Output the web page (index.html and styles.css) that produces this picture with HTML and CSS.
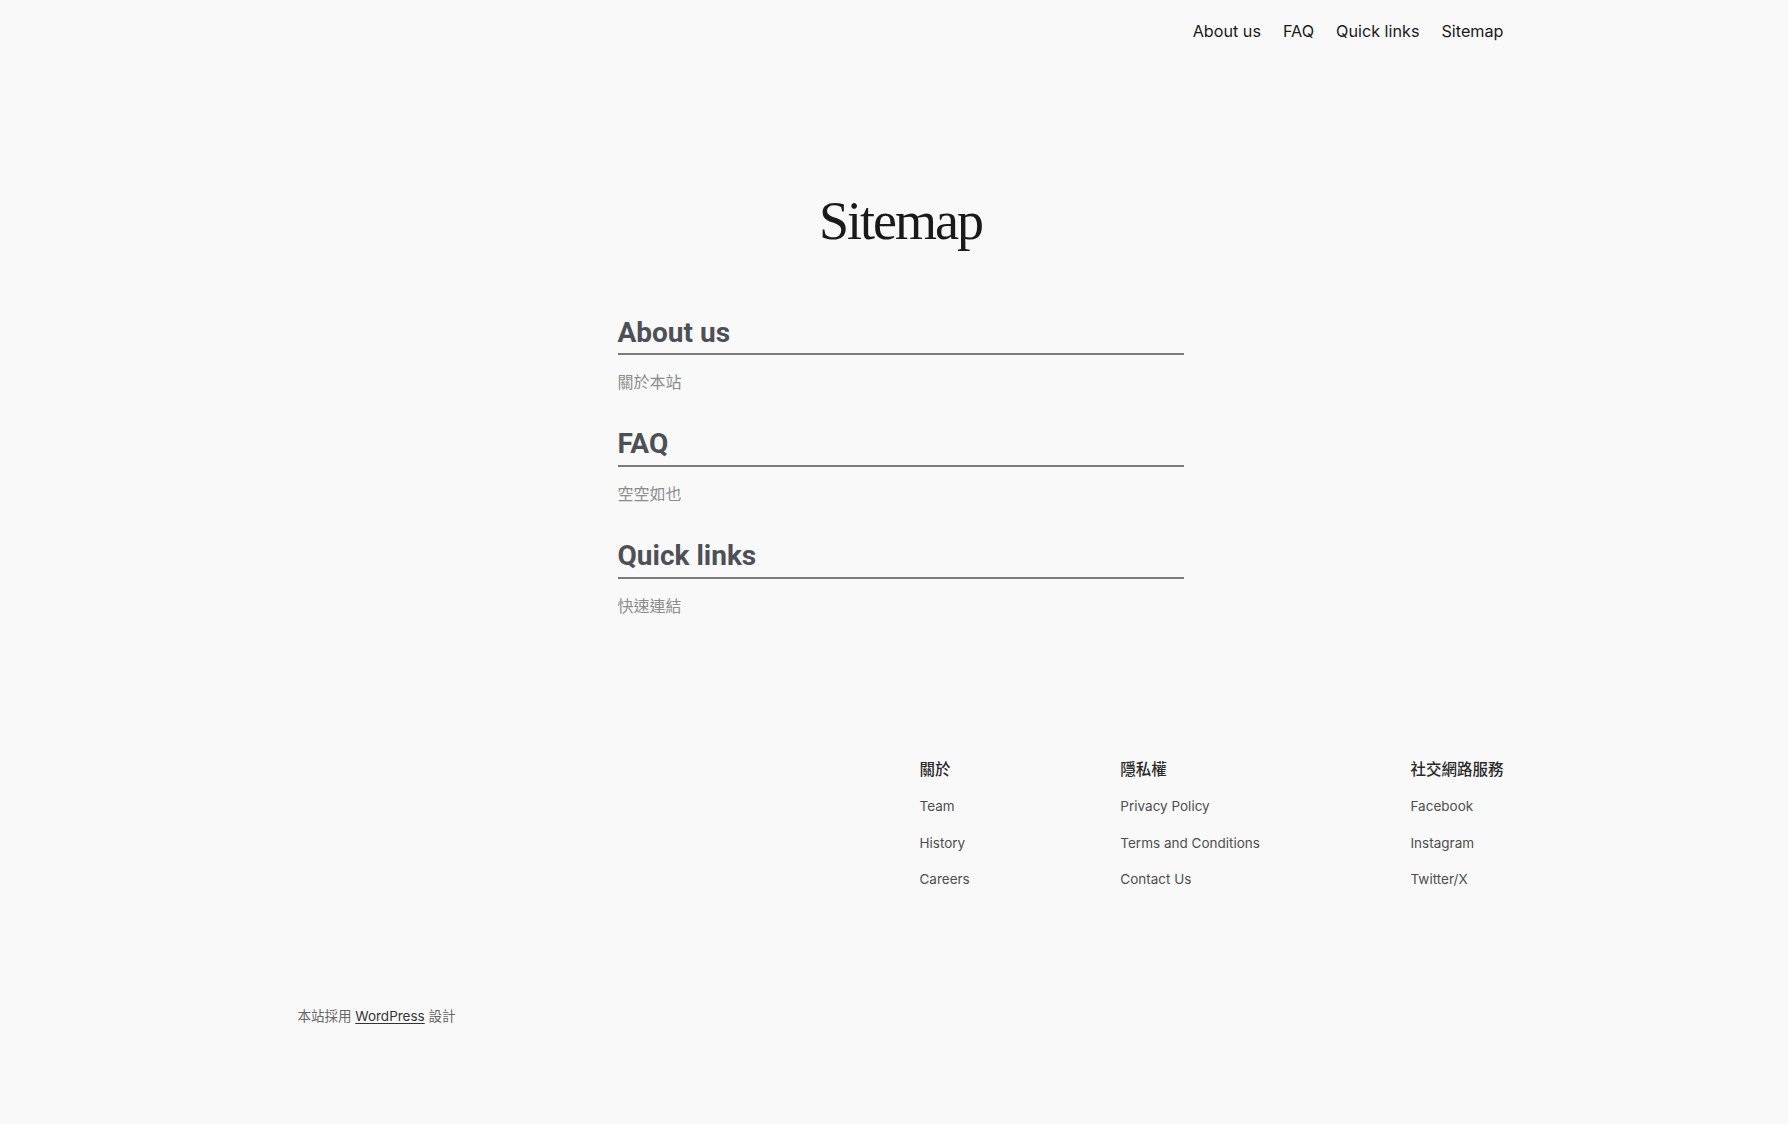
FILE: index.html
```html
<!DOCTYPE html>
<html lang="zh-Hant">
<head>
<meta charset="utf-8">
<title>Sitemap</title>
<link rel="stylesheet" href="styles.css">
</head>
<body>
<div class="page">
  <header class="site-header">
    <nav class="main-nav">
      <a href="#">About us</a>
      <a href="#">FAQ</a>
      <a href="#">Quick links</a>
      <a href="#">Sitemap</a>
    </nav>
  </header>

  <main class="content">
    <h1 class="page-title">Sitemap</h1>
    <section class="entry">
      <h2 class="entry-title">About us</h2>
      <p class="entry-text">關於本站</p>
    </section>
    <section class="entry">
      <h2 class="entry-title">FAQ</h2>
      <p class="entry-text">空空如也</p>
    </section>
    <section class="entry">
      <h2 class="entry-title">Quick links</h2>
      <p class="entry-text">快速連結</p>
    </section>
  </main>

  <footer class="site-footer">
    <div class="footer-cols">
      <div class="footer-nav">
        <div class="footer-col">
          <h3 class="footer-heading">關於</h3>
          <a href="#">Team</a>
          <a href="#">History</a>
          <a href="#">Careers</a>
        </div>
        <div class="footer-col">
          <h3 class="footer-heading">隱私權</h3>
          <a href="#">Privacy Policy</a>
          <a href="#">Terms and Conditions</a>
          <a href="#">Contact Us</a>
        </div>
        <div class="footer-col">
          <h3 class="footer-heading">社交網路服務</h3>
          <a href="#">Facebook</a>
          <a href="#">Instagram</a>
          <a href="#">Twitter/X</a>
        </div>
      </div>
    </div>
    <p class="credit">本站採用 <a href="#">WordPress</a> 設計</p>
  </footer>
</div>
</body>
</html>
```

FILE: styles.css
```css
html, body {
  margin: 0;
  background: #f9f9f9;
}
body {
  padding-left: 13px;
  font-family: "Inter", "Noto Sans CJK TC", sans-serif;
  color: #111;
}
.page {
  width: 1206px;
  margin: 0 auto;
}
a {
  color: inherit;
  text-decoration: none;
}

/* header */
.site-header {
  display: flex;
  justify-content: flex-end;
  padding-top: 20px;
}
.main-nav {
  display: flex;
  gap: 22px;
  font-size: 16.2px;
  line-height: 22px;
  color: #1a1a1a;
}

/* content */
.content {
  width: 566px;
  margin: 0 auto;
}
.page-title {
  margin: 147px 0 0;
  text-align: center;
  font-family: "Liberation Serif", "Noto Sans CJK TC", serif;
  font-weight: 400;
  font-size: 54px;
  line-height: 1.2;
  letter-spacing: -2px;
  color: #1a1a1a;
}
.entry {
  display: flex;
  flex-direction: column;
}
.entry + .entry {
  margin-top: 34px;
}
.entry-title {
  margin: 62px 0 0;
  padding-bottom: 4px;
  border-bottom: 2px solid #7b7b7b;
  font-family: "Roboto", sans-serif;
  font-weight: 700;
  font-size: 28px;
  line-height: 1.2;
  color: #4d5157;
}
.entry + .entry .entry-title {
  margin-top: 0;
}
.entry-text {
  margin: 14px 0 0;
  font-family: "Noto Sans CJK TC", sans-serif;
  font-weight: 400;
  font-size: 16px;
  line-height: 24px;
  color: #8d8d8d;
}

/* footer */
.site-footer {
  margin-top: 140px;
}
.footer-cols {
  display: flex;
  justify-content: flex-end;
}
.footer-nav {
  width: 584px;
  display: flex;
  justify-content: space-between;
}
.footer-col {
  display: flex;
  flex-direction: column;
  gap: 14.5px;
  font-size: 13.5px;
  line-height: 22px;
  color: #4e4e4e;
}
.footer-heading {
  margin: 0 0 2px;
  font-family: "Noto Sans CJK TC", sans-serif;
  font-weight: 500;
  font-size: 15.5px;
  line-height: 22px;
  color: #2a2a2a;
}
.credit {
  margin: 116px 0 0;
  font-size: 13.5px;
  line-height: 20px;
  color: #666;
}
.credit a {
  color: #333;
  text-decoration: underline;
  text-underline-offset: 2px;
}
```
